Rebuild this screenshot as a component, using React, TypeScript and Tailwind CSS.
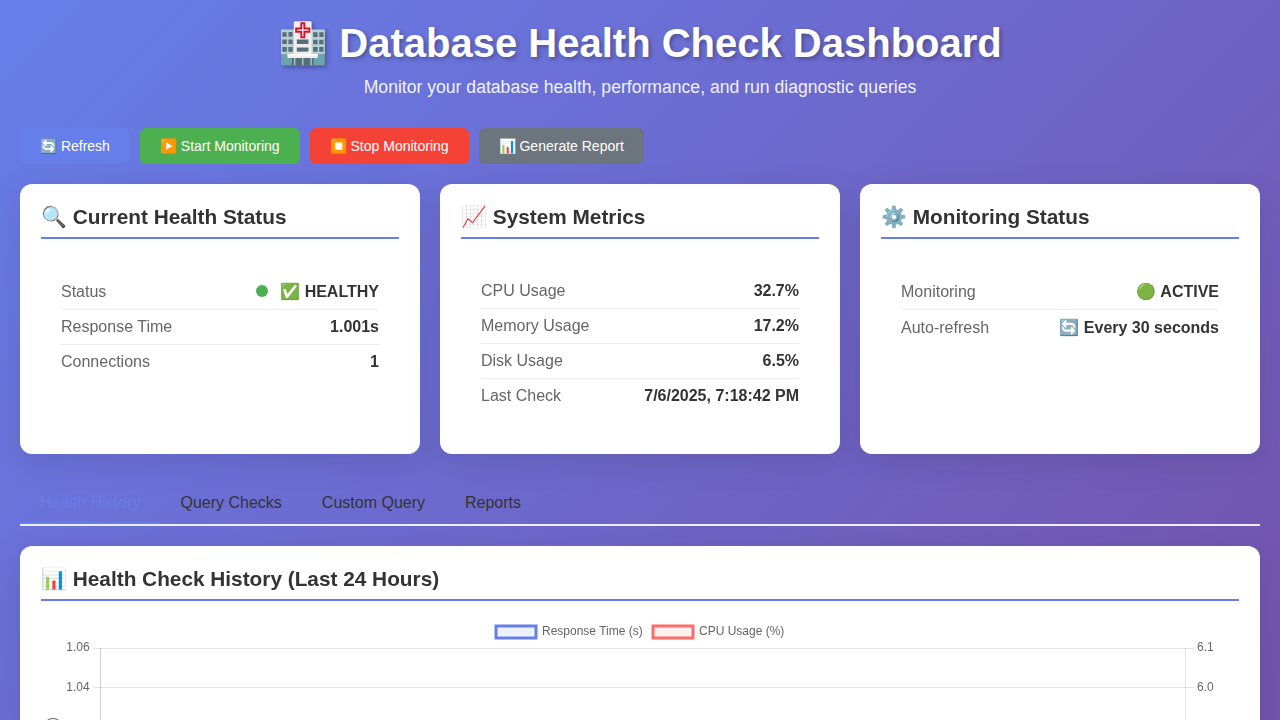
import React from 'react';

const card = 'rounded-xl bg-white p-[21px] shadow-[0_8px_32px_rgba(0,0,0,0.1)] backdrop-blur-[10px]';

function CardTitle({ children }: { children: React.ReactNode }) {
  return (
    <h3 className="mb-5 h-[34px] border-b-2 border-[#667eea] text-[20.8px] font-bold leading-6 text-[#333] whitespace-nowrap">
      {children}
    </h3>
  );
}

function Row({ label, last, tall, children }: { label: string; last?: boolean; tall?: boolean; children: React.ReactNode }) {
  return (
    <div className={`flex items-center justify-between ${tall ? 'h-9' : last ? 'h-[34px]' : 'h-[35px]'} ${last ? '' : 'border-b border-[#eee]'}`}>
      <span className="text-[#666]">{label}</span>
      <span className="font-bold text-[#333]">{children}</span>
    </div>
  );
}

function HistoryChart() {
  return (
    <svg width="1198" height="400" className="block" fontFamily="'Liberation Sans', Arial, sans-serif" fontSize="12" fill="#666">
      <rect x="455" y="5" width="40" height="12" fill="#667eea" fillOpacity="0.1" stroke="#667eea" strokeWidth="3" />
      <text x="501" y="14">Response Time (s)</text>
      <rect x="612" y="5" width="40" height="12" fill="#ff6b6b" fillOpacity="0.1" stroke="#ff6b6b" strokeWidth="3" />
      <text x="658" y="14">CPU Usage (%)</text>
      <path d="M52 27.5H1153M52 66.5H1153M1144.5 27V400" stroke="#000" strokeOpacity="0.1" />
      <path d="M59.5 27V400" stroke="#000" strokeOpacity="0.19" />
      <text x="48.7" y="30" textAnchor="end">1.06</text>
      <text x="48.7" y="70" textAnchor="end">1.04</text>
      <text x="1156" y="30">6.1</text>
      <text x="1156" y="70">6.0</text>
      <text transform="translate(15 146.5) rotate(-90)" textAnchor="middle">Response Time (s)</text>
    </svg>
  );
}

export default function App() {
  return (
    <div className="h-[720px] overflow-hidden bg-[linear-gradient(135deg,#667eea_0%,#764ba2_100%)] bg-[length:100%_1070px] px-5 pt-5 font-['Liberation_Sans',Arial,sans-serif] text-base">
      <header className="h-[108px] text-center text-white">
        <h1 className="h-[46px] whitespace-nowrap text-[40px] font-bold leading-[46px] [text-shadow:2px_2px_4px_rgba(0,0,0,0.3)]">
          🏥 Database Health Check Dashboard
        </h1>
        <p className="mt-[11px] text-[17.6px] leading-5 opacity-90">Monitor your database health, performance, and run diagnostic queries</p>
      </header>
      <div className="mb-5 flex h-9 gap-[10px] text-sm leading-4 text-white">
        <button className="rounded-md bg-[#667eea] px-5">🔄 Refresh</button>
        <button className="rounded-md bg-[#4caf50] px-5">▶️ Start Monitoring</button>
        <button className="rounded-md bg-[#f44336] px-5">⏹️ Stop Monitoring</button>
        <button className="rounded-md bg-[#6c757d] px-5">📊 Generate Report</button>
      </div>
      <div className="mb-[30px] grid h-[270px] grid-cols-3 gap-5">
        <section className={card}>
          <CardTitle>🔍 Current Health Status</CardTitle>
          <div className="p-5 pt-[15px]">
            <Row label="Status" tall><i className="mr-3 inline-block size-3 rounded-full bg-[#4caf50]" />✅ HEALTHY</Row>
            <Row label="Response Time">1.001s</Row>
            <Row label="Connections" last>1</Row>
          </div>
        </section>
        <section className={card}>
          <CardTitle>📈 System Metrics</CardTitle>
          <div className="p-5 pt-[15px]">
            <Row label="CPU Usage">32.7%</Row>
            <Row label="Memory Usage">17.2%</Row>
            <Row label="Disk Usage">6.5%</Row>
            <Row label="Last Check" last>7/6/2025, 7:18:42 PM</Row>
          </div>
        </section>
        <section className={card}>
          <CardTitle>⚙️ Monitoring Status</CardTitle>
          <div className="p-5 pt-[15px]">
            <Row label="Monitoring" tall>🟢 ACTIVE</Row>
            <Row label="Auto-refresh" last tall>🔄 Every 30 seconds</Row>
          </div>
        </section>
      </div>
      <nav className="mb-5 flex h-[42px] border-b-2 border-[#eee] text-[#333]">
        <button className="h-10 border-b-2 border-[#667eea] px-5 text-[#667eea]">Health History</button>
        <button className="border-b-2 border-transparent px-5">Query Checks</button>
        <button className="border-b-2 border-transparent px-5">Custom Query</button>
        <button className="border-b-2 border-transparent px-5">Reports</button>
      </nav>
      <section className={card}>
        <CardTitle>📊 Health Check History (Last 24 Hours)</CardTitle>
        <HistoryChart />
      </section>
    </div>
  );
}
